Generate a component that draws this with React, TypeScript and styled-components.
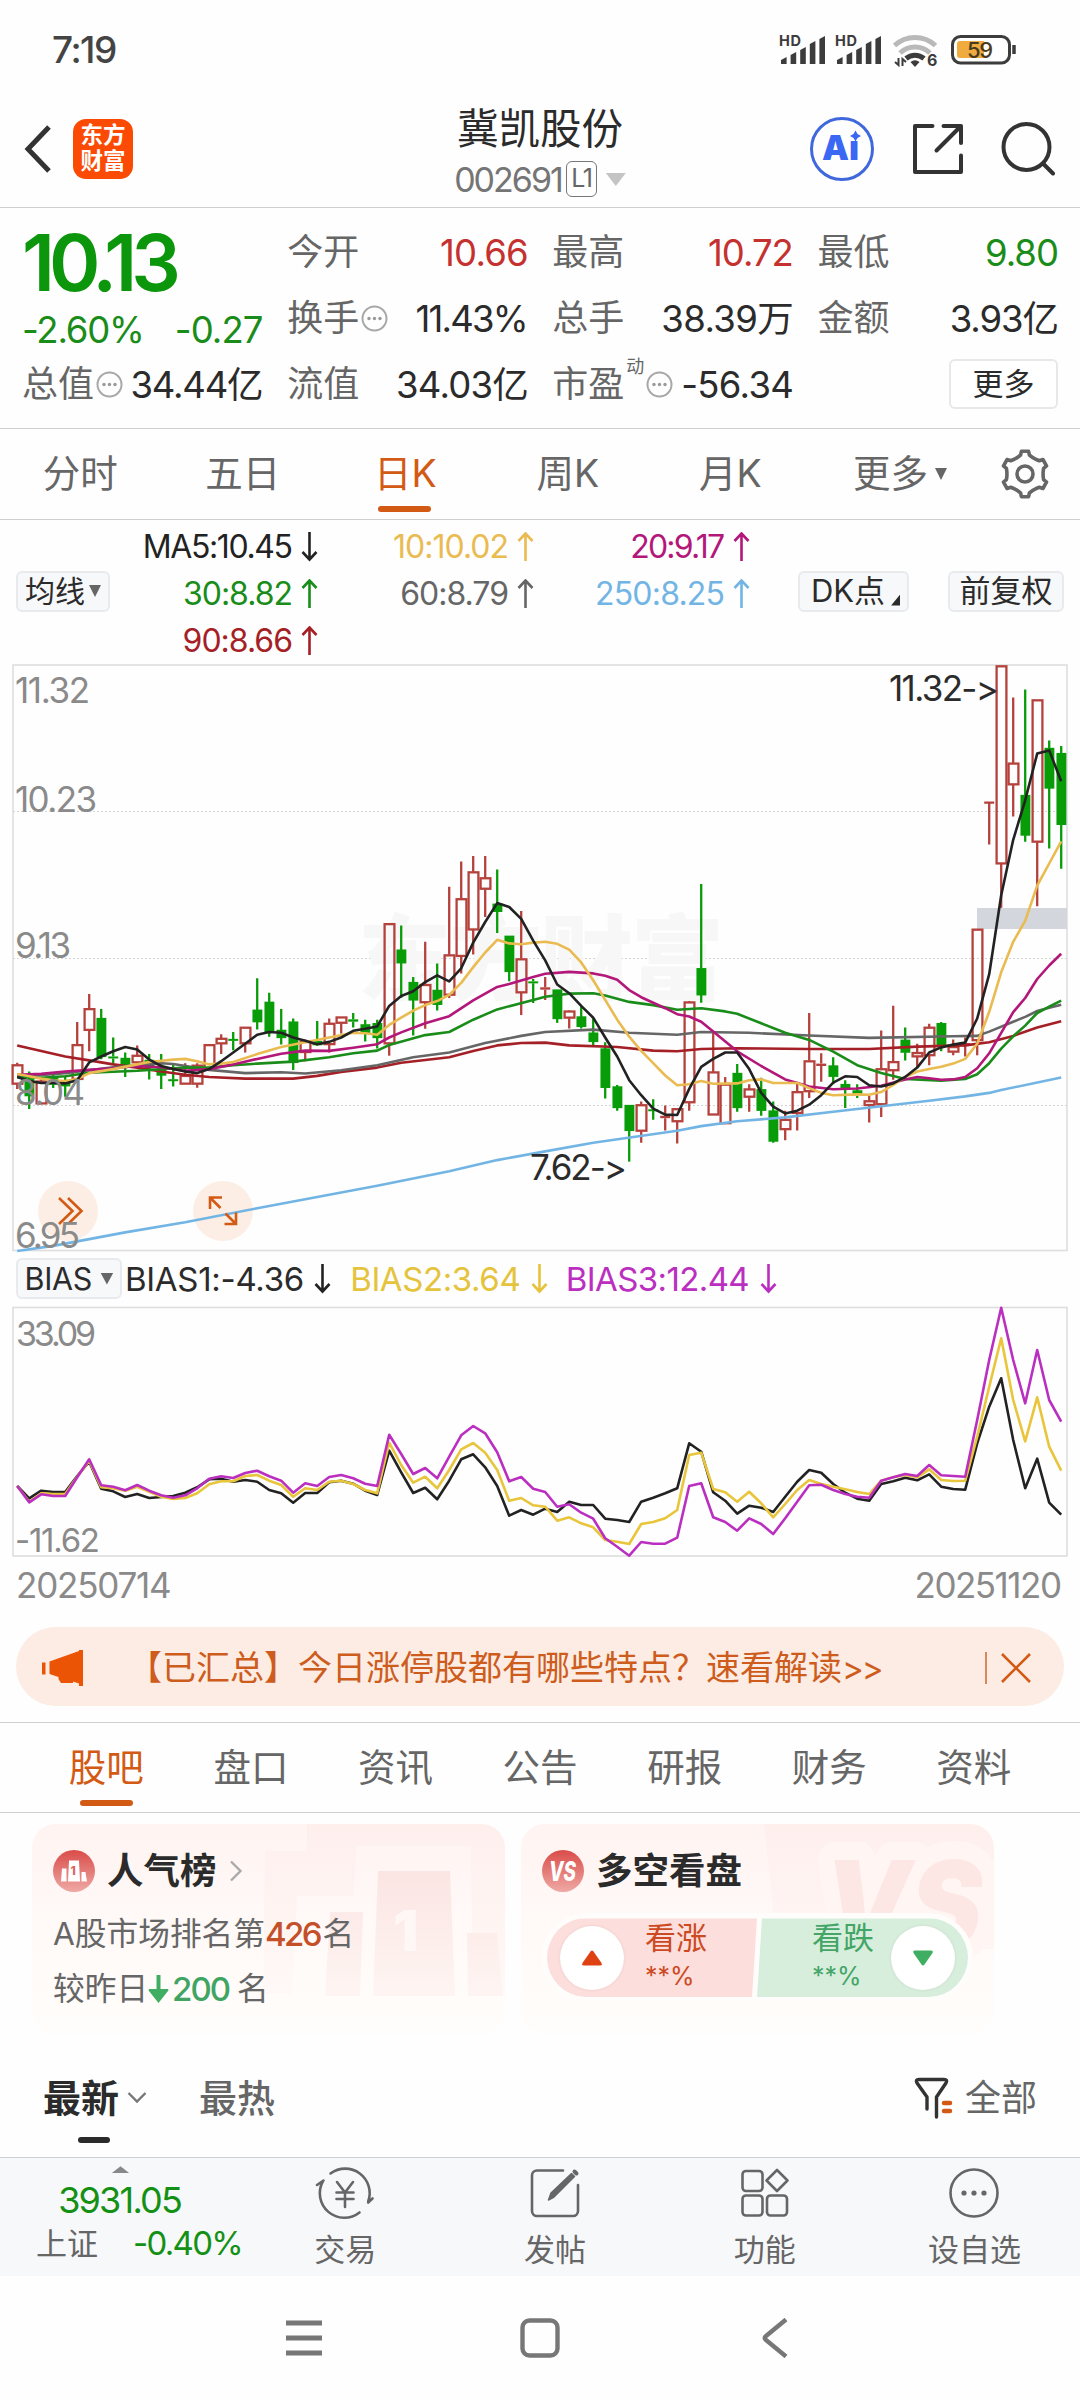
import React from "react";
import styled, { createGlobalStyle } from "styled-components";

const ORANGE = "#d35a14";
const GREEN = "#0b960b";
const RED = "#c4312f";
const INK = "#2b2b2b";
const GREY = "#666";

const Global = createGlobalStyle`
  html, body { margin: 0; padding: 0; background: #fefefe; }
  * { box-sizing: border-box; }
  body, text {
    font-family: Inter, "Noto Sans CJK SC", sans-serif;
    font-feature-settings: "calt" 0, "pnum";
  }
  svg { display: block; flex: none; }
`;

const Screen = styled.main`
  width: 1080px;
  height: 2400px;
  display: flex;
  flex-direction: column;
  overflow: hidden;
  background: #fefefe;
  color: ${INK};
  white-space: nowrap;
`;

const T = styled.span<{ $s: number; $c?: string; $w?: number; $ls?: number }>`
  font-size: ${p => p.$s}px;
  line-height: ${p => Math.round(p.$s * 1.2)}px;
  color: ${p => p.$c || INK};
  font-weight: ${p => p.$w || 400};
  letter-spacing: ${p => p.$ls || 0}px;
  margin-right: ${p => -(p.$ls || 0)}px;
`;
const Spacer = styled.span<{ $w?: number; $h?: number }>`
  flex: none;
  width: ${p => p.$w || 0}px;
  height: ${p => p.$h || 0}px;
`;

/* ---------- status bar ---------- */
const StatusBar = styled.div`
  height: 100px;
  padding: 0 60px 0 52px;
  display: flex;
  justify-content: space-between;
  align-items: center;
`;

const Signal = ({ x }: { x: number }) => (
  <g fill="#3c3c3c">
    <text x={x} y={26} fontSize={14.5} fontWeight={700} textLength={22}>HD</text>
    {[7, 12, 17, 23, 28].map((h, i) => (
      <path key={i} d={`M${x + 2 + i * 9.6} 44v${-(h - 3)}l5.6 -3v${h}z`} />
    ))}
  </g>
);

const StatusIcons = () => (
  <svg width={244} height={60} viewBox="0 0 244 60">
    <Signal x={3} />
    <Signal x={59} />
    <g fill="none" strokeWidth={5}>
      <path d="M118.500 25.500a30 30 0 0 1 41 0" stroke="#b9b9b9" />
      <path d="M124 33a22 22 0 0 1 30 0" stroke="#b9b9b9" />
      <path d="M130 38.500a14 14 0 0 1 18 0" stroke="#3c3c3c" />
    </g>
    <path d="M134.500 42q4.500 -3.500 9 0l-4.500 5z" fill="#3c3c3c" />
    <path d="M122.500 38v7l-3.500 -3M126.500 46v-7l3.500 3" stroke="#3c3c3c" strokeWidth={2} fill="none" />
    <text x={151} y={46} fontSize={16} fontWeight={700} fill="#3c3c3c">6</text>
    <rect x={176.500} y={16.500} width={57} height={26.500} rx={8} fill="none" stroke="#3c3c3c" strokeWidth={3} />
    <path d="M184 21h24v17h-24q-3 0 -3 -3v-11q0 -3 3 -3z" fill="#efab3e" />
    <text x={191} y={38} fontSize={22} fontWeight={500} fill="#4a3a20" textLength={26}>59</text>
    <path d="M238 25v9" stroke="#3c3c3c" strokeWidth={3.500} />
  </svg>
);

/* ---------- title bar ---------- */
const Header = styled.header`
  height: 108px;
  padding: 0 25px 0 23px;
  border-bottom: 1px solid #cfcfcf;
  display: grid;
  grid-template-columns: 1fr 202px 1fr;
`;
const HeaderSide = styled.div<{ $end?: boolean }>`
  display: flex;
  align-items: center;
  justify-content: ${p => (p.$end ? "flex-end" : "flex-start")};
  padding-bottom: 8px;
  gap: ${p => (p.$end ? 36 : 20)}px;
`;
const Logo = styled.div`
  width: 60px;
  height: 60px;
  border-radius: 13px;
  background: #fb4a04;
  color: #fff;
  font-size: 22.5px;
  line-height: 26px;
  font-weight: 700;
  text-align: center;
  padding-top: 3px;
  white-space: pre-line;
`;
const TitleBox = styled.div`
  display: flex;
  flex-direction: column;
  align-items: center;
  padding: 4px 0 0 2px;
  gap: 3px;
`;
const CodeLine = styled.div`
  display: flex;
  align-items: center;
  height: 45px;
`;
const Level = styled.span`
  width: 31px;
  height: 36px;
  margin: 0 9px 0 2px;
  border: 1.5px solid #777;
  border-radius: 6px;
  font-size: 25px;
  line-height: 33px;
  text-align: center;
  letter-spacing: -1.5px;
  color: #666;
`;

/* ---------- quote ---------- */
const Quote = styled.section`
  height: 221px;
  padding: 12px 21px 0 22px;
  border-bottom: 1px solid #cfcfcf;
  display: grid;
  grid-template-columns: repeat(4, 241.5px);
  justify-content: space-between;
`;
const QuoteCol = styled.div`
  display: flex;
  flex-direction: column;
`;
const QuoteRow = styled.div<{ $h?: number }>`
  height: ${p => p.$h || 66}px;
  display: flex;
  align-items: center;
  justify-content: space-between;
`;
const Label = styled.span`
  display: flex;
  align-items: center;
  gap: 2px;
  font-size: 36px;
  line-height: 43px;
  color: ${GREY};
`;
const Sup = styled.sup`
  font-size: 18px;
  line-height: 20px;
  align-self: flex-start;
  margin-top: -6px;
`;
const MoreButton = styled.button`
  width: 109px;
  height: 50px;
  margin: 0 1px 2px auto;
  border: 2px solid #e8e8e8;
  border-radius: 6px;
  background: #fff;
  color: ${INK};
  font: 31px/42px Inter, "Noto Sans CJK SC", sans-serif;
  padding: 0;
`;
const Dots = ({ s = 27 }: { s?: number }) => (
  <svg width={s} height={s} viewBox="0 0 27 27">
    <circle cx={13.500} cy={13.500} r={12} fill="none" stroke="#a8a8a8" strokeWidth={2} />
    {[8, 13.500, 19].map(x => <circle key={x} cx={x} cy={13.500} r={1.700} fill="#999" />)}
  </svg>
);

type Cell = { label: string; value: string; color?: string; dots?: boolean; sup?: string; ls?: number };
const QuoteCell = ({ c }: { c: Cell }) => (
  <QuoteRow>
    <Label>{c.label}{c.sup && <Sup>{c.sup}</Sup>}{c.dots && <Dots />}</Label>
    <T $s={36.5} $c={c.color} $ls={c.ls ?? -0.8}>{c.value}</T>
  </QuoteRow>
);

/* ---------- period tabs ---------- */
const Periods = styled.nav`
  height: 91px;
  border-bottom: 1px solid #cfcfcf;
  display: flex;
`;
const Period = styled.div<{ $on?: boolean; $w?: number }>`
  width: ${p => p.$w || 162.5}px;
  height: 90px;
  display: flex;
  align-items: center;
  justify-content: center;
  gap: 7px;
  position: relative;
  padding: 1px 2px 0 0;
  font-size: 37.5px;
  line-height: 46px;
  color: ${p => (p.$on ? ORANGE : GREY)};
  &::after {
    content: "";
    display: ${p => (p.$on ? "block" : "none")};
    position: absolute;
    bottom: 7px;
    left: 53px;
    width: 53px;
    height: 6px;
    border-radius: 3px;
    background: ${ORANGE};
  }
`;
const Tri = styled.i<{ $w: number; $h: number; $c?: string; $up?: boolean }>`
  width: ${p => p.$w}px;
  height: ${p => p.$h}px;
  background: ${p => p.$c || GREY};
  clip-path: ${p => (p.$up ? "polygon(50% 0, 100% 100%, 0 100%)" : "polygon(0 0, 100% 0, 50% 100%)")};
`;

const gearPath = (() => {
  const pts: string[] = [];
  for (let k = 0; k < 6; k++) {
    const base = -90 + k * 60;
    ([[-24, 18.2], [-13, 19.5], [-9, 23], [9, 23], [13, 19.5], [24, 18.2]] as const).forEach(([a, r]) => {
      const t = ((base + a) * Math.PI) / 180;
      pts.push(`${(25 + r * Math.cos(t)).toFixed(1)} ${(25 + r * Math.sin(t)).toFixed(1)}`);
    });
  }
  return `M${pts.join("L")}Z`;
})();
const Gear = () => (
  <svg width={50} height={50} viewBox="0 0 50 50" fill="none" stroke={GREY} strokeWidth={3.600} strokeLinejoin="round">
    <path d={gearPath} />
    <circle cx={25} cy={25} r={8} />
  </svg>
);

/* ---------- moving average legend ---------- */
const Legend = styled.section`
  height: 141px;
  padding: 2px 16px 0 16px;
  display: flex;
  align-items: center;
`;
const Chip = styled.div<{ $w: number; $s?: number; $ml?: string }>`
  width: ${p => p.$w}px;
  height: 41px;
  margin-left: ${p => p.$ml || 0};
  border: 2px solid #e8eaee;
  border-radius: 6px;
  background: #f7f8fa;
  display: flex;
  align-items: center;
  justify-content: center;
  gap: 4px;
  font-size: ${p => p.$s || 30}px;
  line-height: 36px;
`;
const Corner = styled.i`
  width: 9px;
  height: 11px;
  background: ${INK};
  clip-path: polygon(100% 0, 100% 100%, 0 100%);
  align-self: flex-end;
  margin: 0 -4px 4px 2px;
`;
const Averages = styled.div`
  width: 640px;
  padding-top: 6px;
  display: grid;
  grid-template-columns: 208px 216px 216px;
  grid-auto-rows: 47px;
`;
const Avg = styled.div`
  display: flex;
  align-items: center;
  justify-content: flex-end;
  gap: 8px;
`;
const Arrow = ({ c, down }: { c: string; down?: boolean }) => (
  <svg width={17} height={30} viewBox="0 0 17 30" fill="none" stroke={c} strokeWidth={2.600}>
    <path d={down ? "M8.500 0V27.500M1.500 20L8.500 27.500L15.500 20" : "M8.500 29V1.500M1.500 9L8.500 1.500L15.500 9"} />
  </svg>
);
const averages: [string, string, boolean, number][] = [
  ["MA5:10.45", "#222", true, -1.4], ["10:10.02", "#e9bb50", false, -1], ["20:9.17", "#b3177a", false, -1.8],
  ["30:8.82", "#198c19", false, -1], ["60:8.79", GREY, false, -1], ["250:8.25", "#72b5e4", false, -0.8],
  ["90:8.66", "#a51f26", false, -1],
];

/* ---------- candle chart ---------- */
const cx = (i: number) => 17.2 + i * 12;
const py = (v: number) => 650 + v / 2.529;
/* [up, high, body top, body bottom, low] */
const candles: [number, number, number, number, number][] = [
  [1,1044,1049,1098,1110],[0,1066,1085,1127,1161],[1,1085,1090,1148,1148],[0,1070,1082,1098,1108],[0,1080,1094,1102,1130],
  [1,941,998,1086,1090],[1,870,907,962,1015],[0,908,932,1028,1035],[0,980,1028,1033,1048],[0,1018,1033,1048,1080],
  [1,1000,1025,1044,1048],[0,1022,1038,1056,1086],[0,1022,1060,1075,1110],[0,1048,1086,1090,1104],[1,1045,1076,1098,1098],
  [1,1045,1050,1098,1107],[1,998,998,1060,1060],[1,972,982,996,1022],[0,966,984,988,1012],[1,954,954,996,1018],
  [0,830,911,940,960],[0,867,891,966,978],[0,908,962,980,998],[0,932,941,1043,1062],[1,985,990,1018,1040],
  [0,938,990,998,1000],[1,932,944,998,1018],[1,928,928,944,970],[0,918,934,940,955],[0,935,948,968,990],
  [0,935,945,980,1008],[1,692,692,996,1026],[0,697,759,791,880],[0,827,841,885,975],[1,738,846,892,958],
  [0,793,861,896,912],[1,599,771,873,880],[1,535,629,775,818],[1,521,561,708,770],[1,521,576,605,675],
  [0,555,643,661,716],[0,724,724,813,838],[1,660,781,867,923],[0,832,838,843,893],
  [1,827,853,859,885],[0,860,860,932,943],[1,912,913,931,957],[0,900,928,952,957],[0,932,969,990,1000],
  [0,992,1009,1106,1134],[0,1100,1105,1157,1165],[0,1152,1152,1215,1294],[1,1142,1150,1217,1246],[0,1136,1162,1166,1188],
  [1,1152,1178,1184,1215],[1,1158,1160,1193,1248],[1,888,890,1145,1165],[0,592,806,872,892],[1,968,1067,1176,1176],
  [1,1080,1098,1198,1198],[0,1047,1071,1157,1168],[1,1098,1110,1131,1168],[0,1082,1112,1164,1178],[0,1142,1166,1242,1246],
  [1,1165,1187,1213,1240],[1,1092,1117,1172,1215],[1,918,1039,1117,1133],[1,1020,1046,1052,1092],[0,1030,1052,1078,1098],
  [0,1088,1099,1110,1158],[0,1098,1115,1126,1133],[1,1128,1140,1152,1195],[1,962,1059,1150,1181],[1,900,1041,1064,1087],
  [0,955,987,1017,1038],[1,996,1018,1029,1055],[1,945,954,1026,1050],[0,941,945,998,1015],[1,985,1003,1017,1025],
  [1,980,994,999,1028],[1,706,706,988,1025],[1,386,386,386,492],[1,40,40,541,652],[1,120,286,341,421],
  [0,100,368,468,485],[1,126,126,486,648],[0,229,249,349,502],[0,243,262,441,553],
];
const lines: [string, string][] = [
  ["#72b5e4", "0:1520,3:1507,9:1473,14:1447,20:1412,30:1355,36:1318,40:1290,44:1268,48:1246,55:1216,57:1204,60:1192,64:1182,68:1168,72:1154,76:1140,79:1129,81:1120,82:1113,87:1081"],
  ["#a51f26", "0:1000,2:1014,4:1028,6:1038,8:1048,10:1056,12:1066,14:1074,16:1080,19:1084,23:1084,25:1077,27:1067,30:1056,32:1044,36:1030,38:1014,40:1000,42:994,44:993,46:1000,50:1004,53:1013,55:1015,57:1009,60:1007,66:1009,71:1009,75:1003,79:1000,81:992,83:976,85:955,87:939"],
  ["#666", "0:1080,4:1070,8:1055,12:1045,13:1047,16:1062,19:1070,22:1068,24:1071,27:1063,30:1050,33:1030,36:1018,39:994,42:976,44:966,48:960,51:968,55:973,57:966,61:968,66:975,71:981,78:977,80:976,81:965,83:940,84:928,85:913,86:905,87:897"],
  ["#198c19", "0:1080,2:1082,4:1078,6:1069,10:1064,14:1056,16:1056,18:1050,20:1046,23:1041,26:1030,28:1020,30:1013,31:999,34:974,36:966,38:935,40:909,43:885,44:877,46:869,48:868,49:874,51:890,53:898,55:910,57:906,59:914,60:920,62:944,64:968,66:986,68:1016,70:1050,72:1070,74:1085,77:1089,79:1085,80:1073,81:1045,82:1008,83:977,84:950,85:918,86:902,87:887"],
  ["#b3177a", "0:1074,2:1072,4:1066,6:1062,8:1058,10:1052,12:1055,14:1064,16:1060,18:1048,20:1034,22:1021,24:1013,26:1014,28:1006,30:997,31:980,32:967,34:944,36:926,38:886,40:852,41:845,43:827,44:819,46:814,48:818,49:824,50:834,51:860,52:878,54:906,55:921,56:927,57:940,58:965,60:1015,62:1052,64:1086,66:1104,68:1111,70:1109,72:1102,74:1086,75:1080,76:1083,77:1087,78:1086,79:1080,80:1058,81:1020,82:968,83:916,84:880,85:832,86:798,87:768"],
  ["#e9bb50", "0:1072,1:1078,2:1084,3:1088,4:1090,5:1085,6:1070,8:1060,10:1048,11:1042,13:1036,14:1034,15:1040,16:1048,17:1046,18:1042,20:1022,22:1004,24:992,26:980,28:968,29:969,30:973,31:948,32:930,33:912,34:898,35:888,36:872,37:842,38:802,39:765,40:733,41:742,42:744,43:740,44:738,45:743,46:758,47:790,48:835,49:885,50:935,51:978,52:1014,53:1045,54:1076,55:1101,56:1098,57:1090,58:1097,60:1096,61:1088,62:1086,63:1095,65:1095,66:1108,67:1120,68:1126,70:1124,71:1125,72:1118,73:1100,74:1080,75:1066,76:1060,77:1054,78:1046,79:1034,80:996,81:915,82:815,83:738,84:685,85:596,86:540,87:484"],
  ["#222", "0:1080,1:1090,2:1095,3:1095,4:1096,5:1088,6:1043,7:1028,8:1015,9:1004,10:1010,11:1036,12:1052,13:1060,14:1066,15:1070,16:1060,17:1040,18:1018,19:996,20:973,21:966,22:968,23:980,24:988,25:997,26:991,27:980,28:963,29:958,30:952,31:900,32:875,33:863,34:840,35:823,36:838,37:805,38:740,39:688,40:640,41:650,42:680,43:735,44:785,45:846,46:868,47:900,48:930,49:980,50:1028,51:1088,52:1126,53:1160,54:1175,55:1176,56:1110,57:1054,58:1034,59:1018,60:1018,61:1060,62:1120,63:1155,64:1172,65:1165,66:1150,67:1126,68:1094,69:1078,70:1080,71:1101,72:1104,73:1096,74:1080,75:1056,76:1018,77:1005,78:998,79:993,80:932,81:820,82:620,83:480,84:380,85:262,86:254,87:332"],
];
const toPoints = (s: string) =>
  s.split(",").map(p => { const [i, v] = p.split(":").map(Number); return `${cx(i)},${py(v).toFixed(1)}`; }).join(" ");

const axis: [string, number, number][] = [["11.32", 703, 75], ["10.23", 812, 82], ["9.13", 958, 56], ["8.04", 1105, 70], ["6.95", 1248, 65]];

const Candle = ({ i, d }: { i: number; d: number[] }) => {
  const [up, h, t, b, l] = [d[0], py(d[1]), py(d[2]), py(d[3]), py(d[4])];
  const x = cx(i);
  const c = up ? "#b5413c" : "#089d08";
  const flat = b - t < 1;
  return (
    <g stroke={c} strokeWidth={2.3} fill={up ? "none" : c}>
      <path d={flat ? `M${x} ${t}V${l}M${x - 5} ${t}h10` : `M${x} ${h}V${t}M${x} ${b}V${l}`} />
      {!flat && (b - t < 3
        ? <path d={`M${x - 5} ${(t + b) / 2}h10`} strokeWidth={Math.max(2, b - t)} />
        : <rect x={x - (up ? 4.6 : 3.6)} y={t + 0.500} width={up ? 9.800 : 7.600} height={Math.max(1, b - t - 1)} />)}
    </g>
  );
};

const CandleChart = () => (
  <svg width={1080} height={593} viewBox="0 661 1080 593">
    <rect x={13} y={665} width={1054} height={585.500} fill="none" stroke="#dedede" strokeWidth={1.600} />
    {[811.5, 958.5, 1105.5].map(y => <path key={y} d={`M13 ${y}H1067`} stroke="#d4d4d4" strokeWidth={1.200} strokeDasharray="2 2" />)}
    <text x={358} y={993} fontSize={93} fontWeight={900} fill="#f7f7f7" textLength={366}>东方财富</text>
    <circle cx={68} cy={1211} r={30} fill="#fdeadf" fillOpacity={0.800} />
    <circle cx={223} cy={1211} r={30} fill="#fdeadf" fillOpacity={0.800} />
    <rect x={977} y={908} width={90} height={21} fill="#d3d6dd" />
    {candles.map((d, i) => <Candle key={i} i={i} d={d} />)}
    {lines.map(([c, s]) => <polyline key={c} points={toPoints(s)} fill="none" stroke={c} strokeWidth={2.600} strokeLinejoin="round" />)}
    <g fill="none" stroke={ORANGE} strokeWidth={2.600}>
      <path d="M59 1198L72.500 1211L59 1224M68 1198L81.500 1211L68 1224" />
      <path d="M210 1209V1197.500H222M210 1197.500L220.500 1208M225.500 1213.500L236 1224M236 1212.500V1224H224.500" />
    </g>
    {axis.map(([t, y, w]) => <text key={t} x={15} y={y} fontSize={35} fill="#8a8a8a" textLength={w}>{t}</text>)}
    <text x={889} y={701} fontSize={35} fill={INK} textLength={110}>{"11.32->"}</text>
    <text x={530} y={1180} fontSize={35} fill={INK} textLength={97}>{"7.62->"}</text>
  </svg>
);

/* ---------- BIAS ---------- */
const BiasBar = styled.div`
  height: 50px;
  padding-left: 16px;
  display: flex;
  align-items: center;
  gap: 3px;
`;
const BiasItem = styled.div<{ $mr: number }>`
  display: flex;
  align-items: center;
  gap: 10px;
  margin-right: ${p => p.$mr}px;
`;
const bias: [string, number[]][] = [
  ["#222", [738,775,752,756,756,708,665,746,754,771,762,774,771,768,758,742,718,716,725,720,725,750,760,788,759,759,727,722,731,752,765,632,697,759,743,778,722,658,643,682,738,827,810,824,806,816,785,795,795,836,840,846,785,773,760,745,610,635,757,782,821,797,803,816,770,725,690,698,732,758,776,782,732,724,713,721,703,740,747,749,610,500,415,600,745,656,788,824]],
  ["#e8c53a", [738,785,760,762,762,710,662,742,745,752,740,755,770,777,774,760,733,724,724,708,705,722,735,770,745,750,725,722,732,750,760,608,675,728,710,745,690,628,609,638,690,782,774,796,800,842,832,850,862,900,905,912,852,846,835,810,645,638,747,757,785,755,790,832,792,750,720,732,740,748,756,762,722,712,705,712,688,720,723,722,590,440,295,480,604,472,620,692]],
  ["#bb2fc0", [738,787,763,768,768,712,658,736,740,751,735,752,766,773,766,745,716,709,714,699,692,709,722,758,730,738,711,705,715,731,738,584,642,702,684,715,650,586,558,580,637,724,711,746,756,800,793,818,836,895,920,947,906,911,911,893,738,730,832,846,872,835,852,882,835,785,736,734,750,762,770,773,722,712,702,708,675,706,708,710,540,360,203,360,490,330,480,545]],
];
const BiasChart = () => (
  <svg width={1080} height={254} viewBox="0 1304 1080 254">
    <rect x={13} y={1307.500} width={1054} height={248.500} fill="none" stroke="#dedede" strokeWidth={1.600} />
    <text x={16} y={1346} fontSize={34} fill="#8a8a8a" textLength={80}>33.09</text>
    <text x={15} y={1552} fontSize={33} fill="#8a8a8a" textLength={85}>-11.62</text>
    {bias.map(([c, v]) => (
      <polyline key={c} points={v.map((n, i) => `${cx(i)},${(1240 + n / 3).toFixed(1)}`).join(" ")} fill="none" stroke={c} strokeWidth={2.600} strokeLinejoin="round" />
    ))}
  </svg>
);
const Dates = styled.div`
  height: 60px;
  padding: 0 18px 4px 16px;
  display: flex;
  align-items: center;
  justify-content: space-between;
`;

/* ---------- banner ---------- */
const Banner = styled.div`
  margin: 10px 16px 16px;
  height: 79px;
  border-radius: 40px;
  background: #fcece3;
  display: flex;
  align-items: center;
  padding: 2px 32px 0 25px;
`;
const BannerText = styled.span`
  margin-left: 44px;
  font-size: 34px;
  line-height: 42px;
  color: #cd5c1d;
  flex: 1;
`;
const Rule = styled.i`
  width: 2px;
  height: 32px;
  background: #d98a5c;
  margin-right: 13px;
`;

/* ---------- section tabs ---------- */
const Sections = styled.nav`
  height: 91px;
  padding: 0 33px 0 34px;
  border-top: 1px solid #cfcfcf;
  border-bottom: 1px solid #cfcfcf;
  display: flex;
`;
const Section = styled.div<{ $on?: boolean }>`
  width: 144.6px;
  height: 90px;
  line-height: 90px;
  text-align: center;
  font-size: 37.5px;
  color: ${p => (p.$on ? ORANGE : GREY)};
  position: relative;
  &::after {
    content: "";
    display: ${p => (p.$on ? "block" : "none")};
    position: absolute;
    bottom: 7px;
    left: 46px;
    width: 53px;
    height: 6px;
    border-radius: 3px;
    background: ${ORANGE};
  }
`;

/* ---------- cards ---------- */
const Cards = styled.section`
  height: 221px;
  padding: 11px 32px 0;
  display: flex;
  gap: 16px;
`;
const Card = styled.article`
  width: 473px;
  height: 210px;
  border-radius: 24px;
  position: relative;
  overflow: hidden;
  background: linear-gradient(#fff4f2, #fffaf8 55%, #fffdfb);
  padding: 22px 0 0 21px;
`;
const Decor = styled.svg`
  position: absolute;
  inset: 0;
`;
const CardBody = styled.div`
  position: relative;
  display: flex;
  flex-direction: column;
`;
const CardHead = styled.div`
  display: flex;
  align-items: center;
  gap: 12px;
  height: 50px;
`;
const RankLine = styled.p<{ $h: number }>`
  margin: 0;
  height: ${p => p.$h}px;
  padding-top: 2px;
  display: flex;
  align-items: center;
  font-size: 31.7px;
  line-height: 40px;
  color: ${GREY};
`;
const Badge = ({ vs }: { vs?: boolean }) => (
  <svg width={42} height={42} viewBox="0 0 42 42">
    <defs>
      <linearGradient id="badge" x1="0" y1="0" x2="0" y2="1">
        <stop offset="0" stopColor="#d94c49" /><stop offset="1" stopColor="#efa9a5" />
      </linearGradient>
    </defs>
    <circle cx={21} cy={21} r={21} fill="url(#badge)" />
    {vs
      ? <text x={7} y={30.500} fontSize={27} fontWeight={800} fontStyle="italic" fill="#fff" textLength={27} lengthAdjust="spacingAndGlyphs">VS</text>
      : <>
          <path d="M9 18.500h4.500v13h-5.500zM16 10.500h10l1 21h-12zM28.500 22h4l1.500 9.500h-5.500z" fill="#fff" />
          <text x={17.500} y={25} fontSize={12} fontWeight={800} fill="#db6561">1</text>
        </>}
  </svg>
);
const Pill = styled.div`
  width: 431px;
  height: 89px;
  margin-top: 17px;
  border: 5px solid #fffdfb;
  border-radius: 45px;
  display: flex;
  overflow: hidden;
  background: #fffdfb;
`;
const Side = styled.div<{ $bear?: boolean }>`
  width: ${p => (p.$bear ? 211 : 210)}px;
  height: 79px;
  display: flex;
  align-items: center;
  gap: ${p => (p.$bear ? 17 : 21)}px;
  padding-left: ${p => (p.$bear ? 55 : 13)}px;
  color: ${p => (p.$bear ? "#43a566" : "#cc4a22")};
  background: ${p => (p.$bear ? "#d7eedd" : "#fcdedc")};
  clip-path: ${p => (p.$bear ? "polygon(5px 0, 100% 0, 100% 100%, 0 100%)" : "polygon(0 0, 100% 0, calc(100% - 5px) 100%, 0 100%)")};
`;
const Knob = styled.div`
  width: 64px;
  height: 64px;
  border-radius: 50%;
  background: #fff;
  box-shadow: 0 0 3px rgba(120, 60, 40, 0.12);
  display: flex;
  align-items: center;
  justify-content: center;
`;
const Vote = styled.div`
  width: 62px;
  height: 79px;
  font-size: 31px;
  line-height: 39px;
`;
const VotePct = styled.div`
  font-size: 25px;
  line-height: 38px;
`;

/* ---------- feed tabs ---------- */
const Feed = styled.div`
  height: 123px;
  padding: 4px 43px 0 43px;
  display: flex;
  align-items: center;
`;
const FeedTab = styled.div<{ $on?: boolean }>`
  display: flex;
  align-items: center;
  gap: 8px;
  font-size: 38px;
  line-height: 46px;
  font-weight: ${p => (p.$on ? 700 : 500)};
  color: ${p => (p.$on ? INK : GREY)};
  margin-right: 52px;
  position: relative;
  &::after {
    content: "";
    display: ${p => (p.$on ? "block" : "none")};
    position: absolute;
    left: 35px;
    top: 62px;
    width: 32px;
    height: 6px;
    border-radius: 3px;
    background: ${INK};
  }
`;
const Filter = styled.div`
  margin-left: auto;
  display: flex;
  align-items: center;
  gap: 11px;
  font-size: 36px;
  line-height: 44px;
  color: ${GREY};
`;

/* ---------- bottom bar ---------- */
const Bottom = styled.footer`
  height: 119px;
  border-top: 1px solid #cdcfd2;
  background: #f6f8fa;
  display: flex;
`;
const IndexBox = styled.div`
  width: 241px;
  display: flex;
  flex-direction: column;
  align-items: center;
  padding-top: 8px;
`;
const IndexRow = styled.div`
  display: flex;
  align-items: center;
  gap: 35px;
  padding-left: 36px;
  width: 241px;
  height: 42px;
`;
const Action = styled.div`
  width: 209.700px;
  display: flex;
  flex-direction: column;
  align-items: center;
  padding: 5px 1px 0 0;
  gap: 7px;
  font-size: 31px;
  line-height: 40px;
  color: ${GREY};
`;
const SystemNav = styled.div`
  height: 124px;
  display: flex;
  justify-content: center;
  align-items: center;
  gap: 197px;
`;

const actionIcon = (k: string) => {
  if (k === "交易") return (
    <>
      <path d="M15.500 10.500A24.500 24.500 0 0 1 53.200 38.500M53.200 39.500L57.500 35.500" />
      <path d="M44.500 49.500A24.500 24.500 0 0 1 8 18.200M8.500 17.500L2 22" />
      <path d="M22 19L30 29.500L38 19M30 29.500V44M21.500 29.500H38.500M21.500 36H38.500" />
    </>
  );
  if (k === "发帖") return (
    <>
      <path d="M38 7.500H12a5 5 0 0 0 -5 5V48a5 5 0 0 0 5 5H48a5 5 0 0 0 5 -5V22" />
      <path d="M23.500 37L26 30L46.500 10.500L49.500 13.500L29 34Z" fill={GREY} strokeWidth={1.500} />
      <path d="M49.500 8.500L51.500 10.500" strokeWidth={4} />
    </>
  );
  if (k === "功能") return (
    <>
      <rect x={7.500} y={8} width={20} height={20} rx={3.500} />
      <rect x={7.500} y={32.500} width={20} height={20} rx={3.500} />
      <rect x={32} y={32.500} width={20} height={20} rx={3.500} />
      <path d="M42 7L52.500 17.500L42 28L31.500 17.500Z" />
    </>
  );
  return (
    <>
      <circle cx={30} cy={30} r={23.500} />
      {[20, 30, 40].map(x => <circle key={x} cx={x} cy={30} r={2.600} fill={GREY} stroke="none" />)}
    </>
  );
};

export default function App() {
  return (
    <Screen>
      <Global />
      <StatusBar>
        <T $s={37} $w={500} $c="#444" $ls={-1.5}>7:19</T>
        <StatusIcons />
      </StatusBar>

      <Header>
        <HeaderSide>
          <svg width={30} height={50} viewBox="0 0 30 50" fill="none" stroke="#333" strokeWidth={5}>
            <path d="M26 3L5 25L26 47" />
          </svg>
          <Logo>{"东方\n财富"}</Logo>
        </HeaderSide>
        <TitleBox>
          <T $s={41.5}>冀凯股份</T>
          <CodeLine>
            <T $s={34} $c="#757575" $ls={-2}>002691</T>
            <Level>L1</Level>
            <Tri $w={20} $h={13} $c="#c4c4c4" />
          </CodeLine>
        </TitleBox>
        <HeaderSide $end>
          <svg width={66} height={66} viewBox="0 0 66 66">
            <circle cx={33} cy={33} r={30.500} fill="none" stroke="#3f68dc" strokeWidth={3} />
            <text x={13} y={44} fontSize={34} fontWeight={900} fill="#3a67f4" textLength={37}>Ai</text>
            <circle cx={46.500} cy={19} r={6} fill="#fefefe" />
            <path d="M46.500 14.500L48.500 18L52 20L48.500 22L46.500 25.500L44.500 22L41 20L44.500 18Z" fill="#3a67f4" />
          </svg>
          <svg width={54} height={54} viewBox="0 0 54 54" fill="none" stroke="#333" strokeWidth={4} strokeLinecap="round" strokeLinejoin="round">
            <path d="M21.500 4H4V50H50V33.500M32.500 4H50V21M49 5L25.500 28.500" />
          </svg>
          <svg width={54} height={54} viewBox="0 0 54 54" fill="none" stroke="#333" strokeWidth={4} strokeLinecap="round">
            <circle cx={25.500} cy={25} r={23} /><path d="M42 41.500L52 51.500" />
          </svg>
        </HeaderSide>
      </Header>

      <Quote>
        <QuoteCol>
          <QuoteRow $h={87}><T $s={78} $w={600} $c={GREEN} $ls={-6}>10.13</T></QuoteRow>
          <QuoteRow $h={47}>
            <T $s={36.500} $c="#198c19" $ls={-1.2}>-2.60%</T>
            <T $s={36.500} $c="#198c19" $ls={-0.9}>-0.27</T>
          </QuoteRow>
          <QuoteRow $h={62}>
            <Label>总值<Dots /></Label><T $s={36.500} $ls={-1.2}>34.44亿</T>
          </QuoteRow>
        </QuoteCol>
        <QuoteCol>
          <QuoteCell c={{ label: "今开", value: "10.66", color: RED }} />
          <QuoteCell c={{ label: "换手", value: "11.43%", dots: true, ls: -1.8 }} />
          <QuoteCell c={{ label: "流值", value: "34.03亿", ls: -0.8 }} />
        </QuoteCol>
        <QuoteCol>
          <QuoteCell c={{ label: "最高", value: "10.72", color: RED, ls: -1 }} />
          <QuoteCell c={{ label: "总手", value: "38.39万", ls: -0.6 }} />
          <QuoteCell c={{ label: "市盈", value: "-56.34", sup: "动", dots: true, ls: -0.7 }} />
        </QuoteCol>
        <QuoteCol>
          <QuoteCell c={{ label: "最低", value: "9.80", color: "#198c19", ls: -1 }} />
          <QuoteCell c={{ label: "金额", value: "3.93亿", ls: -1.1 }} />
          <QuoteRow><MoreButton>更多</MoreButton></QuoteRow>
        </QuoteCol>
      </Quote>

      <Periods>
        <Period>分时</Period>
        <Period>五日</Period>
        <Period $on>日K</Period>
        <Period>周K</Period>
        <Period>月K</Period>
        <Period $w={177}>更多<Tri $w={12} $h={12} /></Period>
        <Period $w={73}><Gear /></Period>
      </Periods>

      <Legend>
        <Chip $w={94}>均线<Tri $w={12} $h={12} /></Chip>
        <Averages>
          {averages.map(([t, c, d, ls]) => (
            <Avg key={t}><T $s={32} $c={c} $ls={ls}>{t}</T><Arrow c={c} down={d} /></Avg>
          ))}
        </Averages>
        <Chip $w={111} $s={31} $ml="auto">DK点<Corner /></Chip>
        <Chip $w={116} $s={31} $ml="39px">前复权</Chip>
      </Legend>

      <CandleChart />

      <BiasBar>
        <Chip $w={106}><T $s={30.5} $ls={-0.3}>BIAS</T><Spacer /><Tri $w={13} $h={12} /></Chip>
        <BiasItem $mr={16}><T $s={33} $ls={-0.3}>BIAS1:-4.36</T><Arrow c="#222" down /></BiasItem>
        <BiasItem $mr={15}><T $s={33} $c="#e5c33c" $ls={-0.4}>BIAS2:3.64</T><Arrow c="#e5c33c" down /></BiasItem>
        <BiasItem $mr={0}><T $s={33} $c="#bb2fc0" $ls={-0.6}>BIAS3:12.44</T><Arrow c="#bb2fc0" down /></BiasItem>
      </BiasBar>

      <BiasChart />

      <Dates>
        <T $s={35} $c="#8a8a8a" $ls={-1.2}>20250714</T>
        <T $s={35} $c="#8a8a8a" $ls={-1.5}>20251120</T>
      </Dates>

      <Banner>
        <svg width={43} height={38} viewBox="0 0 43 38" fill="#ea5404">
          <path d="M1 13.500h3.500v12H1zM8.500 12.500L38 2V1h4V37H38V34.500L32 32.500V34H20L17.500 30V28L8.500 25Z" />
        </svg>
        <BannerText>【已汇总】今日涨停股都有哪些特点？速看解读<T $s={33} $c="#cd5c1d" $ls={-2}>&gt;&gt;</T></BannerText>
        <Rule />
        <svg width={32} height={32} viewBox="0 0 32 32" stroke={ORANGE} strokeWidth={2.600}>
          <path d="M2 2L30 30M30 2L2 30" />
        </svg>
      </Banner>

      <Sections>
        {["股吧", "盘口", "资讯", "公告", "研报", "财务", "资料"].map((s, i) => (
          <Section key={s} $on={i === 0}>{s}</Section>
        ))}
      </Sections>

      <Cards>
        <Card>
          <Decor width={473} height={209} viewBox="0 0 473 209">
            <defs>
              <linearGradient id="fade" x1="0" y1="0" x2="0" y2="1">
                <stop offset="0" stopColor="#fbe5e3" /><stop offset="1" stopColor="#fef5f2" />
              </linearGradient>
              <linearGradient id="halo" gradientUnits="userSpaceOnUse" x1="0" y1="0" x2="0" y2="175">
                <stop offset="0" stopColor="#feefed" /><stop offset="1" stopColor="#fff9f7" />
              </linearGradient>
            </defs>
            <path d="M275 0H473V170H466L440 110L439 22H325L321 72H265L260 170H231L233 27H275Z" fill="url(#halo)" />
            <path d="M346 47H418L423 172H341ZM298 88H331L328 172H293ZM435 109H465L471 172H436Z" fill="url(#fade)" />
            <text x={361} y={127} fontSize={56} fontWeight={900} fill="#fff7f5">1</text>
          </Decor>
          <CardBody>
            <CardHead>
              <Badge /><T $s={36.500} $w={700}>人气榜</T>
              <svg width={14} height={22} viewBox="0 0 14 22" fill="none" stroke="#aaa" strokeWidth={2.400}><path d="M2 1.500L11.500 11L2 20.500" /></svg>
            </CardHead>
            <RankLine $h={74}>A股市场排名第<T $s={33} $w={500} $c="#c4502a" $ls={-2.6}>426</T>名</RankLine>
            <RankLine $h={36}>较昨日
              <svg width={21} height={30} viewBox="0 0 21 30" fill="#40ae62"><path d="M8.500 1h4v14h7.500q1 1 0 2L10.500 29L1 17q-1 -1 0 -2h7.500z" /></svg>
              <Spacer $w={3} /><T $s={33} $w={500} $c="#40a562" $ls={-2}>200</T><Spacer $w={6} />名
            </RankLine>
          </CardBody>
        </Card>
        <Card>
          <Decor width={473} height={209} viewBox="0 0 473 209">
            <path d="M243 0H473V125H256Z" fill="url(#halo)" />
            <text x={303} y={122} fontSize={118} fontWeight={900} fontStyle="italic" fill="#fde7e5" stroke="#fff5f2" strokeWidth={36} strokeLinejoin="round" paintOrder="stroke" textLength={158} lengthAdjust="spacingAndGlyphs">VS</text>
          </Decor>
          <CardBody>
            <CardHead><Badge vs /><T $s={36.500} $w={700}>多空看盘</T></CardHead>
            <Pill>
              <Side>
                <Knob><svg width={20} height={16} viewBox="0 0 20 16" fill="#de4213"><path d="M8.500 1.500q1.500 -2 3 0L19.500 13q1 2.500 -1.500 2.500H2Q-0.500 15.500 0.500 13Z" /></svg></Knob>
                <Vote>看涨<VotePct>**%</VotePct></Vote>
              </Side>
              <Side $bear>
                <Vote>看跌<VotePct>**%</VotePct></Vote>
                <Knob><svg width={20} height={16} viewBox="0 0 20 16" fill="#40ae62"><path d="M8.500 14.500q1.500 2 3 0L19.500 3q1 -2.500 -1.500 -2.500H2Q-0.500 0.500 0.500 3Z" /></svg></Knob>
              </Side>
            </Pill>
          </CardBody>
        </Card>
      </Cards>

      <Feed>
        <FeedTab $on>最新
          <svg width={20} height={13} viewBox="0 0 20 13" fill="none" stroke="#777" strokeWidth={2.400}><path d="M1.500 2L10 10.500L18.500 2" /></svg>
        </FeedTab>
        <FeedTab>最热</FeedTab>
        <Filter>
          <svg width={40} height={42} viewBox="0 0 40 42" fill="none" stroke="#333" strokeWidth={3.400} strokeLinecap="round" strokeLinejoin="round">
            <path d="M13 32V20L3 6q-2 -3.500 2 -3.500H30q4 0 2 3.500L22.500 20V40" />
            <path d="M30 26h6M30 34h6" stroke={ORANGE} strokeWidth={4.500} />
          </svg>
          全部
        </Filter>
      </Feed>

      <Bottom>
        <IndexBox>
          <Tri $w={18} $h={7} $c="#888" $up />
          <Spacer $h={6} />
          <T $s={36} $c="#149014" $ls={-1.8}>3931.05</T>
          <IndexRow><T $s={31} $c={GREY}>上证</T><T $s={33} $c="#149014" $ls={-1.7}>-0.40%</T></IndexRow>
        </IndexBox>
        {["交易", "发帖", "功能", "设自选"].map(k => (
          <Action key={k}>
            <svg width={60} height={60} viewBox="0 0 60 60" fill="none" stroke={GREY} strokeWidth={2.600} strokeLinecap="round" strokeLinejoin="round">{actionIcon(k)}</svg>
            {k}
          </Action>
        ))}
      </Bottom>

      <SystemNav>
        <svg width={38} height={36} viewBox="0 0 38 36" stroke="#777" strokeWidth={5}><path d="M1 3H37M1 18H37M1 33H37" /></svg>
        <svg width={40} height={40} viewBox="0 0 40 40" fill="none" stroke="#777" strokeWidth={4.400}><rect x={2.500} y={2.500} width={35} height={35} rx={7} /></svg>
        <svg width={38} height={40} viewBox="0 0 38 40" fill="none" stroke="#777" strokeWidth={4.400}><path d="M29 1.500L9 18q-2.500 2 0 4L29 38.500" /></svg>
      </SystemNav>
    </Screen>
  );
}
